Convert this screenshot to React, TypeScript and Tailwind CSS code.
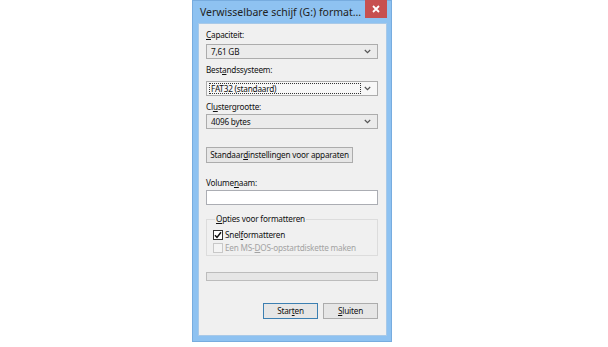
import React from "react";

const font = { fontFamily: '"Segoe UI", "Noto Sans", "Open Sans", sans-serif' };

function Chevron() {
  return (
    <svg width="7" height="5" viewBox="0 0 7 5" className="shrink-0">
      <path d="M0.8 1 L3.5 3.6 L6.2 1" fill="none" stroke="#555" strokeWidth="1.2" />
    </svg>
  );
}

function Label({ children }: { children: React.ReactNode }) {
  return (
    <div className="h-[12px] leading-[12px] text-[8.2px] tracking-[-0.2px] text-[#111] whitespace-nowrap">
      {children}
    </div>
  );
}

function Combo({ value, focused }: { value: string; focused?: boolean }) {
  return (
    <div
      className={`flex items-center h-[15px] border border-[#acacac] pl-[2px] pr-[6px] ${
        focused ? "bg-[#f7f7f7]" : "bg-[#ebebeb]"
      }`}
    >
      <div
        className={`flex-1 h-[11px] leading-[10px] text-[8.2px] tracking-[-0.2px] text-[#111] pl-[1px] whitespace-nowrap ${
          focused ? "border border-dotted border-[#333]" : "border border-transparent"
        }`}
      >
        {value}
      </div>
      <div className="w-[10px] flex justify-end">
        <Chevron />
      </div>
    </div>
  );
}

function Btn({ children, w, focused }: { children: React.ReactNode; w: string; focused?: boolean }) {
  return (
    <div
      className={`${w} h-[16px] flex items-center justify-center text-[8.2px] tracking-[-0.2px] text-[#111] bg-[#e6e6e6] border ${
        focused ? "border-[#3c7fb1]" : "border-[#acacac]"
      }`}
    >
      <span className="whitespace-nowrap">{children}</span>
    </div>
  );
}

export default function App() {
  return (
    <div className="w-[608px] h-[347px] bg-white pl-[192px]" style={font}>
      <div className="w-[200px] h-[342px] bg-[#8ec2f1] border border-[#77acdf] flex flex-col">
        <div className="h-[22px] flex items-start pl-[7px] pr-[4px]">
          <div className="flex-1 pt-[4px] text-[10.5px] leading-[14px] text-[#222] whitespace-nowrap">
            Verwisselbare schijf (G:) format...
          </div>
          <div className="w-[22px] h-[18px] -mt-[1px] bg-[#c75050] flex items-center justify-center">
            <svg width="8" height="8" viewBox="0 0 8 8">
              <path d="M1 1 L7 7 M7 1 L1 7" stroke="white" strokeWidth="1.8" />
            </svg>
          </div>
        </div>
        <div className="flex-1 ml-[5px] mr-[4px] mb-[5px] bg-[#f0f0f0] border border-[#a8c9e8] flex flex-col pl-[7px] pr-[8px]">
          <div className="mt-[5px]">
            <Label>
              <u>C</u>apaciteit:
            </Label>
          </div>
          <div className="mt-[3px]">
            <Combo value="7,61 GB" />
          </div>
          <div className="mt-[5px]">
            <Label>
              Best<u>a</u>ndssysteem:
            </Label>
          </div>
          <div className="mt-[5px]">
            <Combo value="FAT32 (standaard)" focused />
          </div>
          <div className="mt-[5px]">
            <Label>
              Cl<u>u</u>stergrootte:
            </Label>
          </div>
          <div className="mt-[1px]">
            <Combo value="4096 bytes" />
          </div>
          <div className="mt-[18px] flex">
            <Btn w="w-[147px]">
              Standaar<u>d</u>instellingen voor apparaten
            </Btn>
          </div>
          <div className="mt-[14px]">
            <Label>
              Volume<u>n</u>aam:
            </Label>
          </div>
          <div className="mt-[1px] h-[15px] bg-white border border-[#abadb3]" />
          <fieldset className="mt-[8px] border border-[#dcdcdc] pl-[6px] pb-[1px]">
            <legend className="ml-[2px] px-[1px] h-[12px] leading-[12px] text-[8.2px] tracking-[-0.2px] text-[#111]">
              <u>O</u>pties voor formatteren
            </legend>
            <div className="mt-[4px] h-[12px] flex items-center gap-[2px] text-[8.2px] tracking-[-0.2px] text-[#111]">
              <div className="w-[10px] h-[10px] bg-white border border-[#333] flex items-center justify-center">
                <svg width="8" height="8" viewBox="0 0 8 8">
                  <path d="M1 4.2 L3 6.4 L7 1.2" fill="none" stroke="#111" strokeWidth="1.5" />
                </svg>
              </div>
              <span className="whitespace-nowrap">
                Snel<u>f</u>ormatteren
              </span>
            </div>
            <div className="mt-[1px] h-[12px] flex items-center gap-[2px] text-[8.2px] tracking-[-0.2px] text-[#a3a3a3]">
              <div className="w-[10px] h-[10px] bg-[#f4f4f4] border border-[#c8c8c8]" />
              <span className="whitespace-nowrap">
                Een MS-<u>D</u>OS-opstartdiskette maken
              </span>
            </div>
          </fieldset>
          <div className="mt-[16px] h-[9px] bg-[#e6e6e6] border border-[#bcbcbc]" />
          <div className="mt-[22px] flex justify-end gap-[5px]">
            <Btn w="w-[55px]" focused>
              Star<u>t</u>en
            </Btn>
            <Btn w="w-[55px]">
              <u>S</u>luiten
            </Btn>
          </div>
        </div>
      </div>
    </div>
  );
}
